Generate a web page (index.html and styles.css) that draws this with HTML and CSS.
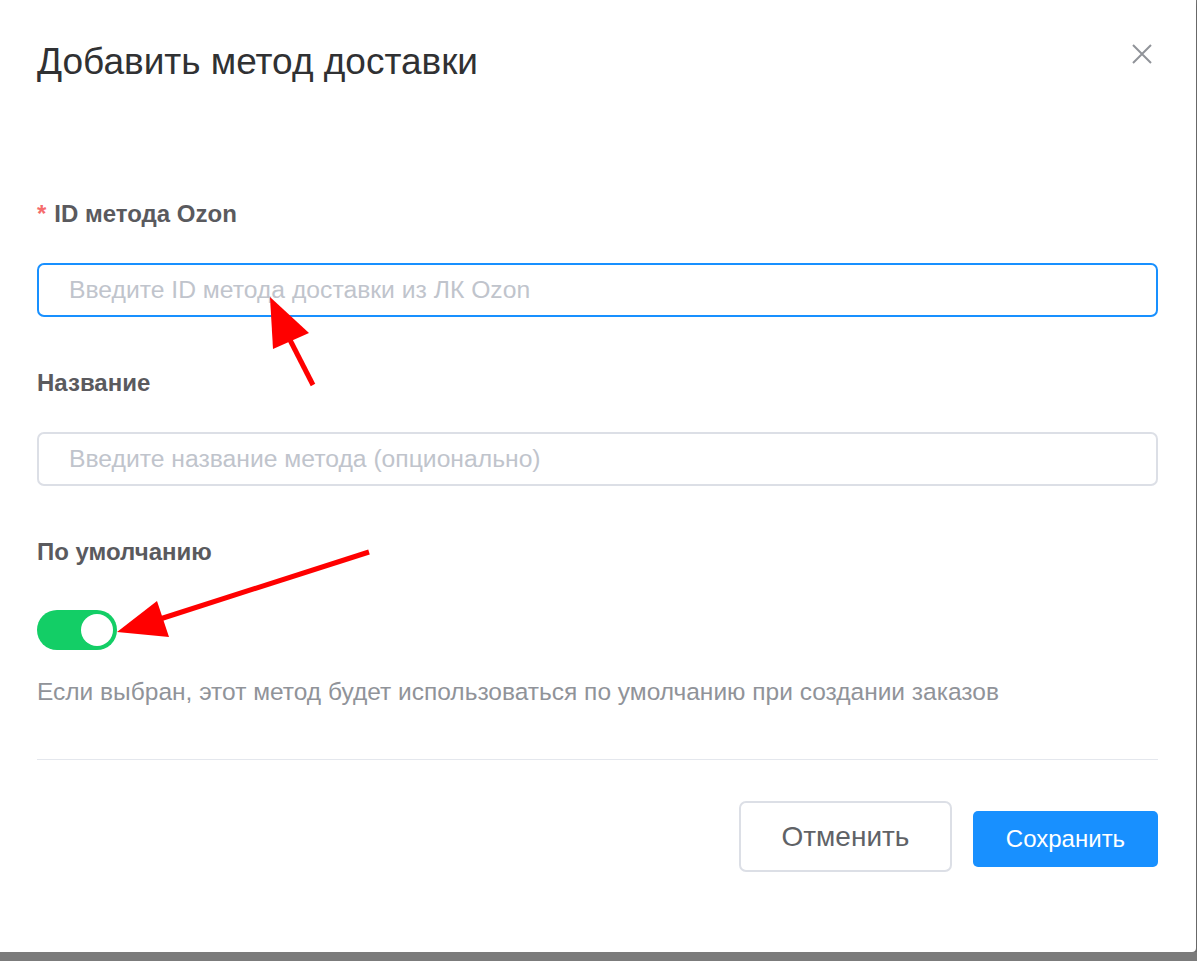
FILE: index.html
```html
<!DOCTYPE html>
<html lang="ru">
<head>
  <meta charset="UTF-8">
  <title>Добавить метод доставки</title>
  <link rel="stylesheet" href="styles.css">
</head>
<body>

<div class="modal">
  <div class="modal-header">
    <h2 class="modal-title">Добавить метод доставки</h2>
    <button class="close-btn" type="button" aria-label="Закрыть">
      <svg width="20" height="20" viewBox="0 0 20 20">
        <path d="M1 1 L19 19 M19 1 L1 19" stroke="#909399" stroke-width="2" fill="none"/>
      </svg>
    </button>
  </div>

  <form class="form">
    <div class="form-item">
      <label class="form-label"><span class="req">*</span>ID метода Ozon</label>
      <input class="field field-focus" type="text" placeholder="Введите ID метода доставки из ЛК Ozon">
    </div>

    <div class="form-item">
      <label class="form-label">Название</label>
      <input class="field" type="text" placeholder="Введите название метода (опционально)">
    </div>

    <div class="form-item form-item-last">
      <label class="form-label">По умолчанию</label>
      <div class="switch switch-on"><span class="knob"></span></div>
      <p class="hint">Если выбран, этот метод будет использоваться по умолчанию при создании заказов</p>
    </div>
  </form>

  <div class="divider"></div>

  <div class="modal-footer">
    <button class="btn btn-default" type="button">Отменить</button>
    <button class="btn btn-primary" type="button">Сохранить</button>
  </div>

  <!-- red pointers drawn on top -->
  <svg class="marks" width="1197" height="961" viewBox="0 0 1197 961">
    <line x1="313" y1="385" x2="289" y2="338" stroke="#ff0000" stroke-width="5"/>
    <polygon points="270,297 273,349 309,333" fill="#ff0000"/>
    <line x1="369" y1="552" x2="160" y2="619" stroke="#ff0000" stroke-width="5"/>
    <polygon points="117,632 157,601 169,637" fill="#ff0000"/>
  </svg>
</div>

</body>
</html>
```

FILE: styles.css
```css
body {
  margin: 0;
  background-color: #7b7b7b;
  font-family: "Liberation Sans", Arial, sans-serif;
}
.modal {
  position: relative;
  width: 1196px;
  height: 952px;
  box-sizing: border-box;
  padding: 0 38px 0 37px;
  background: #fff;
  border-radius: 0 0 4px 0;
  box-shadow: 0 2px 6px rgba(0, 0, 0, 0.35);
}
.modal-header {
  display: flex;
  justify-content: space-between;
  align-items: flex-start;
  padding-top: 42px;
}
.modal-title {
  margin: 0;
  font-size: 37px;
  line-height: 40px;
  font-weight: normal;
  color: #303133;
}
.close-btn {
  margin: 2px 6px 0 0;
  padding: 0;
  width: 20px;
  height: 20px;
  border: none;
  background: transparent;
  cursor: pointer;
}
.close-btn svg {
  display: block;
}
.form {
  margin-top: 117px;
}
.form-item {
  display: flex;
  flex-direction: column;
  align-items: flex-start;
  margin-bottom: 51px;
}
.form-item-last {
  margin-bottom: 0;
}
.form-label {
  font-size: 24px;
  line-height: 30px;
  font-weight: bold;
  color: #5a5a5e;
  margin-bottom: 34px;
}
.req {
  color: #f56c6c;
  margin-right: 8px;
}
.field {
  width: 100%;
  height: 54px;
  box-sizing: border-box;
  padding: 0 30px;
  border: 2px solid #dcdfe6;
  border-radius: 7px;
  font-family: "Liberation Sans", Arial, sans-serif;
  font-size: 24.7px;
  color: #606266;
  outline: none;
}
.field::placeholder {
  color: #c0c4cc;
}
.field-focus {
  border-color: #1890ff;
}
.form-item-last .form-label {
  margin-bottom: 43px;
}
.switch {
  display: flex;
  justify-content: flex-end;
  align-items: center;
  width: 80px;
  height: 40px;
  box-sizing: border-box;
  padding: 4px;
  border-radius: 20px;
  background: #dcdfe6;
}
.switch-on {
  background: #13ce66;
}
.knob {
  width: 32px;
  height: 32px;
  border-radius: 50%;
  background: #fff;
}
.hint {
  margin: 27px 0 0;
  font-size: 24.5px;
  line-height: 30px;
  color: #909399;
}
.divider {
  height: 1px;
  margin-top: 52px;
  background: #e4e7ed;
}
.modal-footer {
  display: flex;
  justify-content: flex-end;
  align-items: flex-start;
  gap: 21px;
  margin-top: 41px;
}
.btn {
  font-family: "Liberation Sans", Arial, sans-serif;
  cursor: pointer;
}
.btn-default {
  width: 213px;
  height: 71px;
  border: 2px solid #dcdfe6;
  border-radius: 7px;
  background: #fff;
  font-size: 28px;
  color: #606266;
}
.btn-primary {
  width: 185px;
  height: 56px;
  margin-top: 10px;
  border: none;
  border-radius: 5px;
  background: #1890ff;
  font-size: 24px;
  color: #fff;
}
.marks {
  position: absolute;
  left: 0;
  top: 0;
  pointer-events: none;
}
```
